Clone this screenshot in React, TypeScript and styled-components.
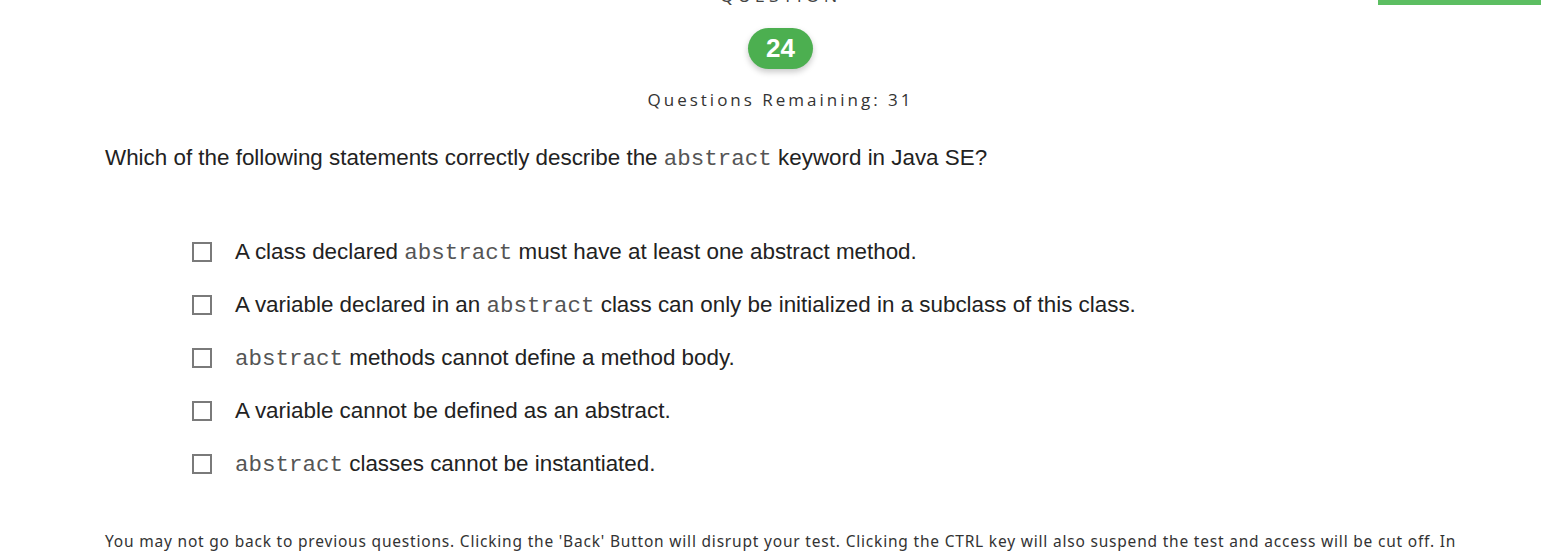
import React from "react";
import styled, { createGlobalStyle } from "styled-components";

const Global = createGlobalStyle`
  html, body { margin: 0; padding: 0; background: #fff; overflow: hidden; }
  body { font-family: "Liberation Sans", Arial, sans-serif; color: #222; }
`;

const Page = styled.div`
  position: relative;
  width: 1541px;
  height: 555px;
  overflow: hidden;
`;

const ProgressBar = styled.div`
  position: absolute;
  top: 0;
  right: 0;
  width: 163px;
  height: 5px;
  background: #5cbe62;
`;

const Content = styled.div`
  padding: 0 85px 0 105px;
  display: flex;
  flex-direction: column;
`;

const Header = styled.div`
  display: flex;
  flex-direction: column;
  align-items: center;
`;

const QuestionLabel = styled.div`
  margin-top: -16px;
  font-family: "Open Sans", sans-serif;
  font-size: 18px;
  letter-spacing: 4px;
  line-height: 22px;
  color: #444;
`;

const Badge = styled.div`
  margin-top: 22px;
  width: 65px;
  height: 41px;
  border-radius: 21px;
  background: #4caf50;
  color: #fff;
  font-family: "Liberation Sans", Arial, sans-serif;
  font-weight: 700;
  font-size: 26px;
  display: flex;
  align-items: center;
  justify-content: center;
  box-shadow: 0 3px 6px rgba(0, 0, 0, 0.22);
`;

const Remaining = styled.div`
  margin-top: 20px;
  font-family: "Open Sans", sans-serif;
  font-size: 17px;
  letter-spacing: 3px;
  color: #333;
  line-height: 22px;
`;

const Question = styled.div`
  margin-top: 35px;
  font-size: 22.4px;
  line-height: 24px;
  height: 24px;
  color: #222;
`;

const Code = styled.code`
  font-family: "Liberation Mono", "Courier New", monospace;
  font-size: 22.5px;
  line-height: 1;
  color: #555;
`;

const Options = styled.div`
  margin-top: 70px;
  padding-left: 87px;
  display: flex;
  flex-direction: column;
  gap: 29px;
`;

const Option = styled.label`
  display: flex;
  align-items: center;
  gap: 23px;
  height: 24px;
  font-size: 22.4px;
  line-height: 24px;
  color: #222;
  letter-spacing: 0;
`;

const Box = styled.span`
  width: 16px;
  height: 16px;
  border: 2px solid #7a7a7a;
  flex: none;
`;

const Notice = styled.p`
  margin: 54px 0 0;
  font-family: "Noto Sans", sans-serif;
  font-size: 15.5px;
  line-height: 22px;
  color: #333;
  letter-spacing: 0.8px;
  white-space: nowrap;
`;

const options: React.ReactNode[] = [
  <>A class declared <Code>abstract</Code> must have at least one abstract method.</>,
  <>A variable declared in an <Code>abstract</Code> class can only be initialized in a subclass of this class.</>,
  <><Code>abstract</Code> methods cannot define a method body.</>,
  <>A variable cannot be defined as an abstract.</>,
  <><Code>abstract</Code> classes cannot be instantiated.</>,
];

export default function App() {
  return (
    <Page>
      <Global />
      <ProgressBar />
      <Content>
        <Header>
          <QuestionLabel>QUESTION</QuestionLabel>
          <Badge>24</Badge>
          <Remaining>Questions Remaining: 31</Remaining>
        </Header>
        <Question>
          Which of the following statements correctly describe the <Code>abstract</Code> keyword in Java SE?
        </Question>
        <Options>
          {options.map((o, i) => (
            <Option key={i}>
              <Box />
              <span>{o}</span>
            </Option>
          ))}
        </Options>
        <Notice>
          You may not go back to previous questions. Clicking the 'Back' Button will disrupt your test. Clicking the CTRL key will also suspend the test and access will be cut off. In
        </Notice>
      </Content>
    </Page>
  );
}
